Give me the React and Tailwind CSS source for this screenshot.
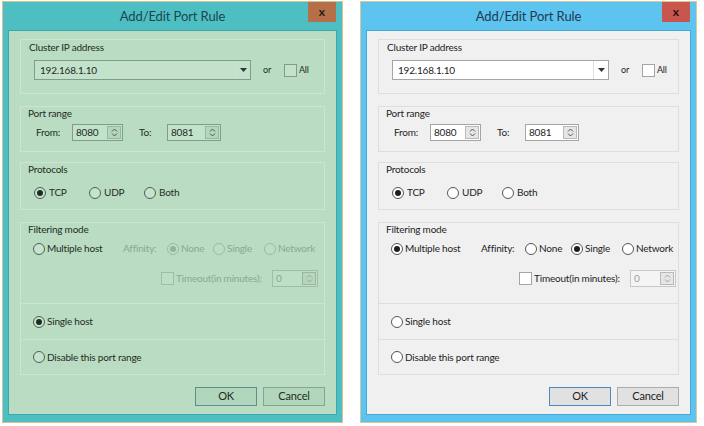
import React from 'react';

const themes = {
  green: {
    outer: 'border-[#d6c08e] bg-[#4dbfc3]',
    title: 'text-[#1d4550]',
    close: 'bg-[#b5704a] text-[#2a1a12]',
    body: 'bg-[#b9dcc3] border-[#3ea6ad]',
    group: 'border-[#cbe5d2]',
    text: 'text-[#1f2c24]',
    dim: 'text-[#8aa895]',
    input: 'bg-[#c3e2cb] border-[#7f9e8a]',
    inputOff: 'bg-[#bddfc5] border-[#9fbca8]',
    arrow: 'bg-[#b4d6bc] border-[#98b7a2]',
    radio: 'border-[#4d5f54] bg-[#c6e4cd]',
    radioOff: 'border-[#9cb9a6] bg-[#bddec5]',
    dot: 'bg-[#1f2c24]',
    dotOff: 'bg-[#94b29f]',
    btn: 'bg-[#b2d6bb] border-[#86a590]',
    okBtn: 'bg-[#b2d6bb] border-[#5d8f8c]',
  },
  blue: {
    outer: 'border-[#d9c79c] bg-[#5cc4ee]',
    title: 'text-[#223a52]',
    close: 'bg-[#c9564c] text-[#2b0e0c]',
    body: 'bg-[#f0f0f0] border-[#46a9d6]',
    group: 'border-[#dedede]',
    text: 'text-[#1e1e1e]',
    dim: 'text-[#9c9c9c]',
    input: 'bg-[#ffffff] border-[#a5a5a5]',
    inputOff: 'bg-[#f4f4f4] border-[#c8c8c8]',
    arrow: 'bg-[#e6e6e6] border-[#b9b9b9]',
    radio: 'border-[#555555] bg-[#ffffff]',
    radioOff: 'border-[#b5b5b5] bg-[#f4f4f4]',
    dot: 'bg-[#1e1e1e]',
    dotOff: 'bg-[#aaaaaa]',
    btn: 'bg-[#e1e1e1] border-[#adadad]',
    okBtn: 'bg-[#e1e1e1] border-[#4a8ac0]',
  },
};

function Radio({ on, off, t }) {
  return (
    <span className={`w-[12px] h-[12px] rounded-full border flex items-center justify-center shrink-0 ${off ? t.radioOff : t.radio}`}>
      {on && <span className={`w-[6px] h-[6px] rounded-full ${off ? t.dotOff : t.dot}`} />}
    </span>
  );
}

function Box({ t, off }) {
  return <span className={`block w-[13px] h-[13px] border shrink-0 ${off ? t.inputOff : t.input}`} />;
}

function Spinner({ value, w, off, t }) {
  return (
    <div className={`flex h-[17px] border ${off ? t.inputOff : t.input} ${w}`}>
      <span className={`flex-1 pl-[3px] leading-[15px] ${off ? t.dim : t.text}`}>{value}</span>
      <div className={`w-[14px] my-[1px] mr-[1px] flex flex-col border ${t.arrow}`}>
        <span className="flex-1 flex items-center justify-center">
          <svg width="7" height="4" viewBox="0 0 7 4"><path d="M1 3.5 L3.5 1 L6 3.5" fill="none" stroke={off ? '#a0a0a0' : '#555'} strokeWidth="1" /></svg>
        </span>
        <span className="flex-1 flex items-center justify-center">
          <svg width="7" height="4" viewBox="0 0 7 4"><path d="M1 0.5 L3.5 3 L6 0.5" fill="none" stroke={off ? '#a0a0a0' : '#555'} strokeWidth="1" /></svg>
        </span>
      </div>
    </div>
  );
}

function Dialog({ t, multi, w }) {
  return (
    <div className={`flex flex-col h-[422px] border ${t.outer} ${w}`}>
      {/* barra de título */}
      <div className="h-[28px] flex items-start shrink-0">
        <div className="w-[34px]" />
        <div className={`flex-1 text-center text-[13px] tracking-[-0.1px] leading-[29px] ${t.title}`}>Add/Edit Port Rule</div>
        <div className="w-[34px] flex">
          <div className={`w-[28px] h-[20px] flex items-center justify-center text-[12px] font-bold leading-none ${t.close}`}>x</div>
        </div>
      </div>

      <div className={`flex-1 mx-[5px] mb-[8px] border px-[11px] pt-[8px] pb-[8px] flex flex-col text-[10px] tracking-[-0.2px] whitespace-nowrap ${t.body} ${t.text}`}>
        {/* Cluster IP */}
        <div className={`border pl-[8px] pb-[14px] h-[55px] ${t.group}`}>
          <div className="leading-[12px] mt-[1px]">Cluster IP address</div>
          <div className="flex items-center mt-[7px] pl-[5px]">
            <div className={`w-[217px] h-[20px] border flex items-center ${t.input}`}>
              <span className="flex-1 pl-[5px]">192.168.1.10</span>
              <span className={`w-[15px] h-full border-l flex items-center justify-center ${t.group}`}>
                <svg width="7" height="4" viewBox="0 0 7 4"><path d="M0 0 H7 L3.5 4 Z" fill="#333" /></svg>
              </span>
            </div>
            <span className="ml-[12px] text-[9px]">or</span>
            <span className="ml-[13px]"><Box t={t} /></span>
            <span className="ml-[2px] text-[9px]">All</span>
          </div>
        </div>

        {/* Port range */}
        <div className={`border pl-[7px] h-[46px] mt-[12px] ${t.group}`}>
          <div className="leading-[12px]">Port range</div>
          <div className="flex items-center mt-[5px] pl-[8px]">
            <span className="w-[36px]">From:</span>
            <Spinner value="8080" w="w-[51px]" t={t} />
            <span className="ml-[16px] w-[28px]">To:</span>
            <Spinner value="8081" w="w-[54px]" t={t} />
          </div>
        </div>

        {/* Protocols */}
        <div className={`border pl-[7px] h-[48px] mt-[10px] ${t.group}`}>
          <div className="leading-[12px]">Protocols</div>
          <div className="flex items-center mt-[10px] pl-[6px]">
            <span className="w-[55px] flex items-center gap-[3px]"><Radio on t={t} />TCP</span>
            <span className="w-[55px] flex items-center gap-[3px]"><Radio t={t} />UDP</span>
            <span className="w-[55px] flex items-center gap-[3px]"><Radio t={t} />Both</span>
          </div>
        </div>

        {/* Filtering mode */}
        <div className={`border mt-[12px] flex flex-col ${t.group}`}>
          <div className="h-[80px] pl-[7px]">
            <div className="leading-[12px]">Filtering mode</div>
            <div className="flex items-center mt-[6px] pl-[5px]">
              <span className="w-[90px] flex items-center gap-[2px]"><Radio on={multi} t={t} />Multiple host</span>
              <span className={`w-[44px] ${multi ? t.text : t.dim}`}>Affinity:</span>
              <span className={`w-[46px] flex items-center gap-[2px] ${multi ? t.text : t.dim}`}><Radio on={!multi} off={!multi} t={t} />None</span>
              <span className={`w-[51px] flex items-center gap-[2px] ${multi ? t.text : t.dim}`}><Radio on={multi} off={!multi} t={t} />Single</span>
              <span className={`flex items-center gap-[2px] ${multi ? t.text : t.dim}`}><Radio off={!multi} t={t} />Network</span>
            </div>
            <div className="flex items-center mt-[14px] pl-[133px]">
              <Box t={t} off={!multi} />
              <span className={`ml-[2px] w-[96px] ${multi ? t.text : t.dim}`}>Timeout(in minutes):</span>
              <Spinner value="0" w="w-[46px]" off t={t} />
            </div>
          </div>
          <div className={`h-[36px] border-t pl-[12px] flex items-center gap-[2px] ${t.group}`}>
            <Radio on={!multi} t={t} />Single host
          </div>
          <div className={`h-[35px] border-t pl-[12px] flex items-center gap-[2px] ${t.group}`}>
            <Radio t={t} />Disable this port range
          </div>
        </div>

        {/* Botones */}
        <div className="flex justify-end gap-[6px] mt-[12px]">
          <div className={`w-[62px] h-[19px] border flex items-center justify-center text-[11px] ${t.okBtn}`}>OK</div>
          <div className={`w-[62px] h-[19px] border flex items-center justify-center text-[11px] ${t.btn}`}>Cancel</div>
        </div>
      </div>
    </div>
  );
}

export default function App() {
  return (
    <div className="w-[704px] h-[426px] bg-white flex items-start pt-[1px] pl-[2px] gap-[17px]" style={{ fontFamily: 'Lato, "Liberation Sans", sans-serif' }}>
      <Dialog t={themes.green} multi={false} w="w-[341px]" />
      <Dialog t={themes.blue} multi w="w-[337px]" />
    </div>
  );
}
